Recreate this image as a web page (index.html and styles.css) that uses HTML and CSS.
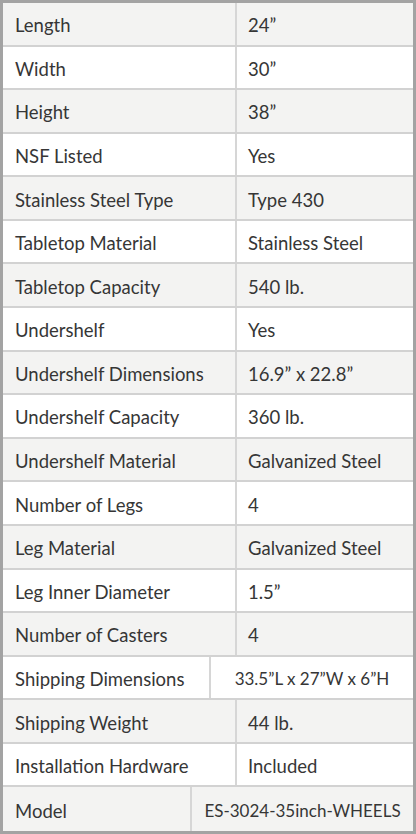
FILE: index.html
```html
<!DOCTYPE html>
<html>
<head>
<meta charset="utf-8">
<link rel="stylesheet" href="styles.css">
</head>
<body>
<div class="spec">
  <div class="row alt"><div class="k">Length</div><div class="v">24”</div></div>
  <div class="row"><div class="k">Width</div><div class="v">30”</div></div>
  <div class="row alt"><div class="k">Height</div><div class="v">38”</div></div>
  <div class="row"><div class="k">NSF Listed</div><div class="v">Yes</div></div>
  <div class="row alt"><div class="k">Stainless Steel Type</div><div class="v">Type 430</div></div>
  <div class="row"><div class="k">Tabletop Material</div><div class="v">Stainless Steel</div></div>
  <div class="row alt"><div class="k">Tabletop Capacity</div><div class="v">540 lb.</div></div>
  <div class="row"><div class="k">Undershelf</div><div class="v">Yes</div></div>
  <div class="row alt"><div class="k">Undershelf Dimensions</div><div class="v">16.9” x 22.8”</div></div>
  <div class="row"><div class="k">Undershelf Capacity</div><div class="v">360 lb.</div></div>
  <div class="row alt"><div class="k">Undershelf Material</div><div class="v">Galvanized Steel</div></div>
  <div class="row"><div class="k">Number of Legs</div><div class="v">4</div></div>
  <div class="row alt"><div class="k">Leg Material</div><div class="v">Galvanized Steel</div></div>
  <div class="row"><div class="k">Leg Inner Diameter</div><div class="v">1.5”</div></div>
  <div class="row alt"><div class="k">Number of Casters</div><div class="v">4</div></div>
  <div class="row"><div class="k k-ship">Shipping Dimensions</div><div class="v v-center">33.5”L x 27”W x 6”H</div></div>
  <div class="row alt"><div class="k">Shipping Weight</div><div class="v">44 lb.</div></div>
  <div class="row"><div class="k">Installation Hardware</div><div class="v">Included</div></div>
  <div class="row alt last"><div class="k k-model">Model</div><div class="v v-center">ES-3024-35inch-WHEELS</div></div>
</div>
</body>
</html>
```
FILE: styles.css
```css
html, body {
  margin: 0;
  padding: 0;
  background: #ffffff;
}
.spec {
  box-sizing: border-box;
  width: 416px;
  height: 834px;
  border: 3px solid #a3a3a3;
  display: grid;
  grid-template-rows: repeat(19, 1fr);
  font-family: Lato, "Open Sans", sans-serif;
  font-size: 18.5px;
  color: #363636;
}
.row {
  display: flex;
  background: #ffffff;
  border-bottom: 2px solid #d2d2d2;
  box-sizing: border-box;
}
.row.alt {
  background: #f3f3f2;
}
.row.last {
  border-bottom: none;
}
.k {
  box-sizing: border-box;
  width: 234px;
  flex: none;
  padding-left: 12px;
  padding-top: 3px;
  display: flex;
  align-items: center;
  border-right: 2px solid #d6d6d6;
}
.k-ship {
  width: 208px;
}
.k-model {
  width: 189px;
}
.v {
  flex: 1;
  padding-left: 11px;
  padding-top: 3px;
  display: flex;
  align-items: center;
}
.v-center {
  justify-content: center;
  padding-left: 0;
  font-size: 17px;
}
```
